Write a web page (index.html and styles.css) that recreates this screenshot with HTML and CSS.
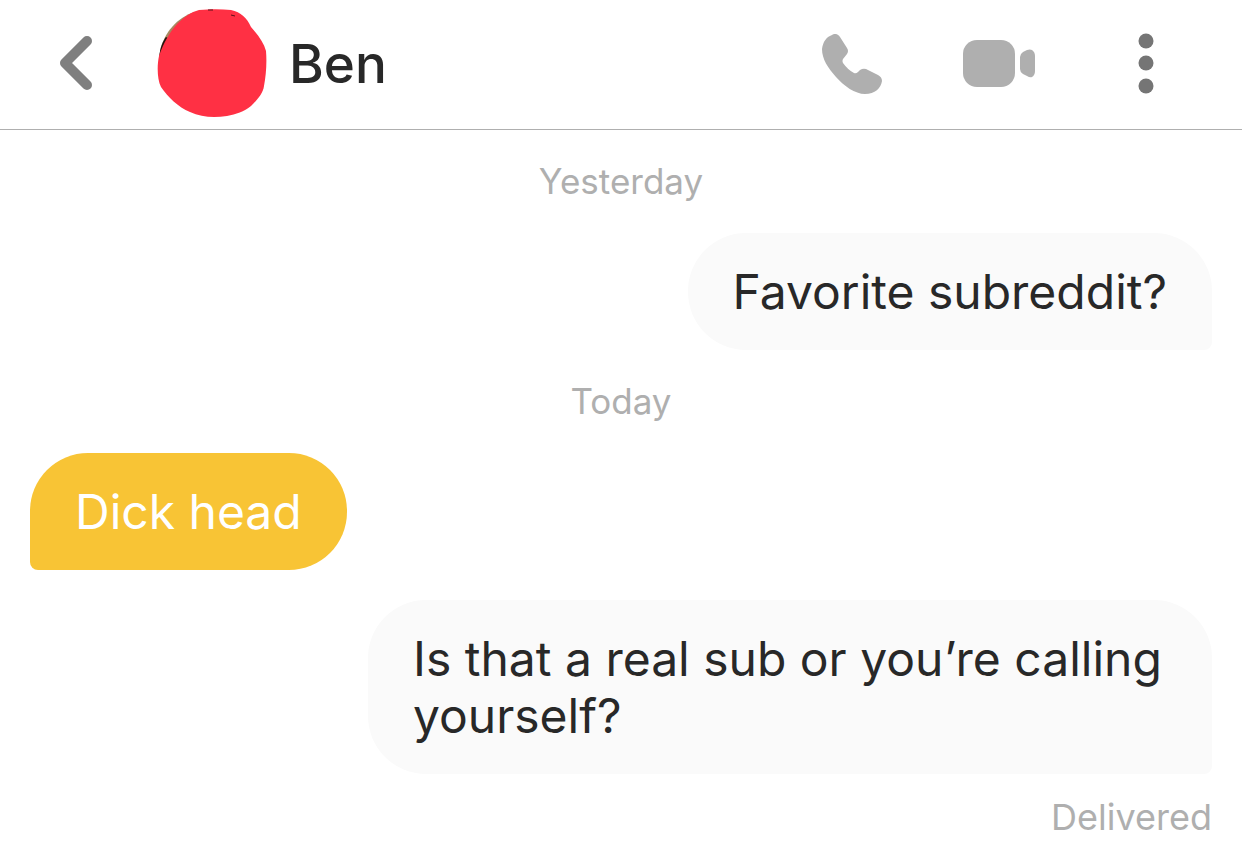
FILE: index.html
```
<!DOCTYPE html>
<html lang="en">

<head>
  <meta charset="utf-8">
  <meta name="viewport" content="width=device-width, initial-scale=1.0">

  <title>Ben</title>

  <link rel="stylesheet" href="styles.css">
</head>

<body>
  <header class="header">
    <button type="button" class="back" aria-label="Back">
      <svg width="34" height="56" viewBox="0 0 34 56" fill="none" stroke="#7f7f7f" stroke-width="10" stroke-linecap="round" stroke-linejoin="round">
        <path d="M28 5 L6 27 L28 49" />
      </svg>
    </button>

    <svg class="avatar" width="110" height="110" viewBox="0 0 110 110" aria-hidden="true">
      <path fill="#a8875f" d="M3 42 C7 24 20 8 38 3 L34 20 L10 44 Z" />
      <path fill="#26150f" d="M2 49 C3 38 6 32 9 28 L13 30 L10 44 Z" />
      <path fill="#ff3044" d="M42 1 C54 0 64 0 74 1 C84 3 90 9 94 18 C101 26 107 34 109 42 C110 54 109 66 107 77 C106 85 99 92 94 97 C87 103 79 105 70 107 C56 109 44 108 33 103 C21 98 11 88 4 78 C0 70 0 56 2 47 C6 35 12 24 20 15 C27 8 34 3 42 1 Z" />
      <path fill="none" stroke="#5c1018" stroke-width="1" d="M51 1 h5 M74 6 l4 1" />
    </svg>

    <h1 class="name">Ben</h1>

    <nav class="actions">
      <button type="button" aria-label="Call">
        <svg width="60" height="60" viewBox="0 0 60 60" fill="#afafaf">
          <path d="M10 1 C13 -1 16 0 18 3 L25 14 Q27 17 25 20 L21 25 Q20 27 21 29 Q26 36 32 39 Q34 40 36 38 L38 36 Q41 34 44 35 L56 41 Q60 43 60 47 C59 54 53 60 43 60 C33 60 22 52 14 43 C6 34 0 25 0 15 C1 8 4 3 10 1 Z" />
        </svg>
      </button>
      <button type="button" aria-label="Video call">
        <svg width="72" height="48" viewBox="0 0 72 48" fill="#afafaf">
          <rect x="0" y="0" width="52" height="47" rx="14" />
          <path d="M57 17 Q57 14 60 12 L64 10 Q67 9 69 10 Q72 12 72 16 V31 Q72 35 69 37 Q67 38 64 36 L60 34 Q57 32 57 29 Z" />
        </svg>
      </button>
      <button type="button" aria-label="More">
        <svg width="16" height="62" viewBox="0 0 16 62" fill="#757575">
          <circle cx="8" cy="8" r="7.5" />
          <circle cx="8" cy="30" r="7.5" />
          <circle cx="8" cy="53" r="7.5" />
        </svg>
      </button>
    </nav>
  </header>

  <main class="chat">
    <div class="date">Yesterday</div>
    <div class="message sent">Favorite subreddit?</div>
    <div class="date">Today</div>
    <div class="message received">Dick head</div>
    <div class="message sent">Is that a real sub or you’re calling yourself?</div>
    <div class="status">Delivered</div>
  </main>
</body>

</html>
```

FILE: styles.css
```
body {
  font-family: Inter, "Liberation Sans", sans-serif;
  background-color: white;
  color: #282828;
  margin: 0;
}

button {
  display: flex;
  align-items: center;
  justify-content: center;
  padding: 0;
  border: none;
  background: none;
  cursor: pointer;
}

.header {
  display: flex;
  align-items: center;
  padding: 9px 60px 10px 59px;
  border-bottom: 1px solid #afafaf;
}

.avatar {
  margin-left: 64px;
}

.name {
  margin: 0 0 0 22px;
  font-size: 53px;
  font-weight: 500;
  line-height: 64px;
}

.actions {
  display: flex;
  gap: 75px;
  margin-left: auto;
}

.actions button {
  width: 72px;
}

.chat {
  display: flex;
  flex-direction: column;
  gap: 30px;
  padding: 30px;
}

.date,
.status {
  color: #afafaf;
  font-size: 35px;
  line-height: 43px;
}

.date {
  text-align: center;
}

.message {
  box-sizing: border-box;
  max-width: 844px;
  padding: 30px 45px;
  border-radius: 58px;
  font-size: 48px;
  line-height: 57px;
}

.sent {
  align-self: flex-end;
  background: #fafafa;
  border-bottom-right-radius: 8px;
}

.received {
  align-self: flex-start;
  background: #f8c435;
  color: white;
  border-bottom-left-radius: 8px;
}

.status {
  align-self: flex-end;
  margin-top: -8px;
  font-size: 36px;
}
```
